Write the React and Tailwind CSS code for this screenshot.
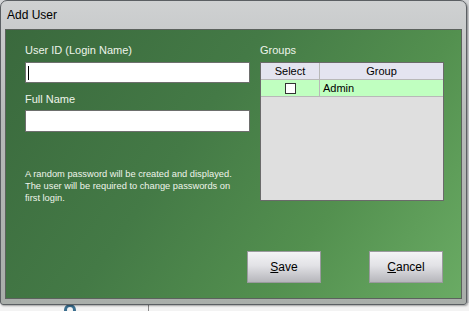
const Button = ({ hot, rest }) => (
  <button className="flex h-[32px] w-[74px] items-center justify-center border border-[#9a9a9e] bg-[linear-gradient(180deg,#f4f4f6_0%,#e2e2e6_45%,#b6b6bb_100%)] text-[12px] text-black">
    <span>
      <span className="underline">{hot}</span>
      {rest}
    </span>
  </button>
);

export default function App() {
  return (
    <div
      className="relative h-[311px] w-[469px] overflow-hidden bg-[#d4d6d8]"
      style={{ fontFamily: '"Liberation Sans", Arial, sans-serif' }}
    >
      {/* window behind */}
      <div className="absolute bottom-0 left-0 right-0 h-[8px] bg-[#f3f3f3]">
        <div className="absolute left-[64px] top-[1px] h-[12px] w-[12px] rounded-full border-[3px] border-[#3a6f8f]" />
        <div className="absolute left-[148px] top-0 h-full w-px bg-[#8a8a8a]" />
      </div>

      <div className="relative flex h-[305px] w-[467px] flex-col rounded-t-[7px] rounded-b-[3px] border border-[#5b5f63] bg-[linear-gradient(180deg,#cfd1d2_0%,#b7bab9_40%,#a9aeaa_100%)] shadow-[1px_1px_2px_rgba(0,0,0,0.35)]">
        <div className="flex h-[28px] items-center pl-[6px] text-[12px] text-black">
          Add User
        </div>

        <div className="mx-[4px] flex h-[270px] border border-[#5c625d] bg-[linear-gradient(125deg,#3a693d_0%,#447a46_40%,#53904f_70%,#6aab64_100%)]">
          <div className="flex w-[236px] flex-col pl-[19px] pt-[13px]">
            <label className="text-[11px] leading-[14px] text-[#eef4ea]">
              User ID (Login Name)
            </label>
            <div className="mt-[5px] flex h-[21px] w-[225px] items-center border border-[#6d6f6d] bg-white pl-[2px]">
              <div className="h-[14px] w-px bg-black" />
            </div>
            <label className="mt-[9px] text-[11px] leading-[14px] text-[#eef4ea]">
              Full Name
            </label>
            <div className="mt-[4px] h-[22px] w-[225px] border border-[#6d6f6d] bg-white" />
            <p className="mt-[36px] text-[9.3px] leading-[12px] text-[#eef4ea]">
              A random password will be created and displayed.
              <br />
              The user will be required to change passwords on
              <br />
              first login.
            </p>
          </div>

          <div className="flex flex-1 flex-col pl-[18px] pt-[13px]">
            <div className="text-[11px] leading-[14px] text-[#eef4ea]">Groups</div>
            <div className="mt-[5px] flex h-[139px] w-[184px] flex-col border border-[#6a6a6a] bg-[#dfdfdf] text-[11px] text-black">
              <div className="flex h-[17px] border-b border-[#b8b8b8] bg-[#e4e4f0]">
                <div className="flex w-[59px] items-center justify-center border-r border-[#b8b8b8]">
                  Select
                </div>
                <div className="flex flex-1 items-center justify-center">Group</div>
              </div>
              <div className="flex h-[17px] border-b border-[#b8b8b8] bg-[#c0ffc0]">
                <div className="flex w-[59px] items-center justify-center border-r border-[#b8b8b8]">
                  <div className="h-[11px] w-[11px] border border-[#333] bg-white" />
                </div>
                <div className="flex flex-1 items-center pl-[3px]">Admin</div>
              </div>
            </div>

            <div className="mt-[50px] -ml-[13px] flex gap-[48px]">
              <Button hot="S" rest="ave" />
              <Button hot="C" rest="ancel" />
            </div>
          </div>
        </div>
      </div>
    </div>
  );
}
